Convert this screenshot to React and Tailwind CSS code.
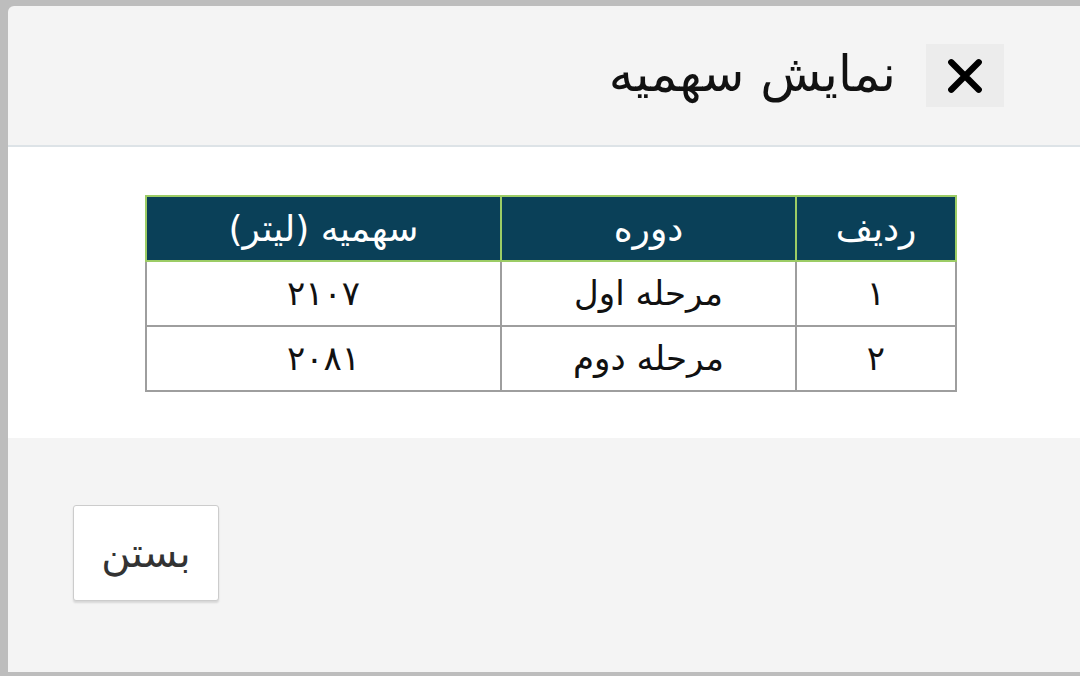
import React from "react";

const font = { fontFamily: '"DejaVu Sans", "Noto Sans", sans-serif' };

export default function App() {
  const rows = [
    { n: "۱", d: "مرحله اول", q: "۲۱۰۷" },
    { n: "۲", d: "مرحله دوم", q: "۲۰۸۱" },
  ];
  return (
    <div
      className="w-[1080px] h-[676px] overflow-hidden bg-[#bdbdbd] pl-[8px] pt-[6px] pb-[4px] flex"
      style={font}
    >
      <div dir="rtl" className="flex-1 flex flex-col rounded-tl-[6px] overflow-hidden bg-[#f4f4f4]">
        <div className="h-[141px] shrink-0 border-b-2 border-[#dde3e7] flex items-center pr-[76px] gap-[30px]">
          <button className="w-[78px] h-[63px] bg-[#ececec] flex items-center justify-center">
            <svg width="38" height="38" viewBox="0 0 36 36">
              <path d="M5 5 L31 31 M31 5 L5 31" stroke="#000" strokeWidth="6" strokeLinecap="round" />
            </svg>
          </button>
          <div className="text-[50px] text-[#111] leading-none pb-[4px]">نمایش سهمیه</div>
        </div>
        <div className="h-[291px] shrink-0 bg-white pt-[48px] pr-[123px]">
          <table className="w-[812px] border-collapse text-[34px] text-center">
            <thead>
              <tr className="bg-[#0a4058] text-white h-[65px] text-[36px]">
                <th className="w-[160px] border-2 border-[#9ccc65] font-normal">ردیف</th>
                <th className="w-[295px] border-2 border-[#9ccc65] font-normal">دوره</th>
                <th className="border-2 border-[#9ccc65] font-normal">سهمیه (لیتر)</th>
              </tr>
            </thead>
            <tbody>
              {rows.map((r) => (
                <tr key={r.n} className="h-[65px] text-[#111]">
                  <td className="border-2 border-[#9e9e9e]">{r.n}</td>
                  <td className="border-2 border-[#9e9e9e]">{r.d}</td>
                  <td className="border-2 border-[#9e9e9e]">{r.q}</td>
                </tr>
              ))}
            </tbody>
          </table>
        </div>
        <div className="flex-1 flex items-start justify-end pl-[65px] pt-[67px]">
          <button className="w-[146px] h-[96px] bg-white border border-[#cccccc] rounded-[3px] shadow-[0_2px_2px_rgba(0,0,0,0.12)] text-[40px] text-[#333]">
            بستن
          </button>
        </div>
      </div>
    </div>
  );
}
